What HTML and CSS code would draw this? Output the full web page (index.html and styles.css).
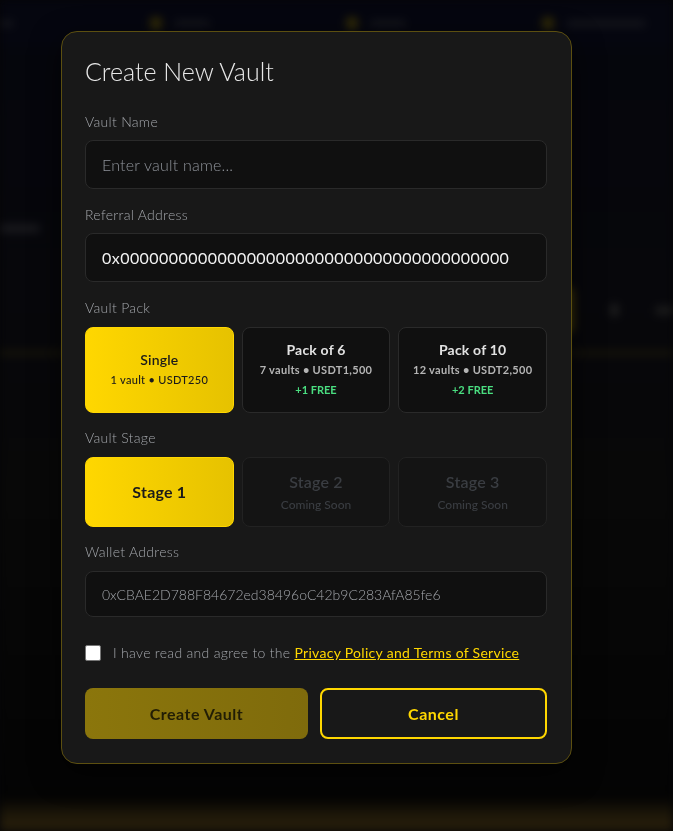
FILE: index.html
```html
<!DOCTYPE html>
<html lang="en">
<head>
    <meta charset="UTF-8">
    <meta name="viewport" content="width=device-width, initial-scale=1.0">
    <title>Create New Vault</title>
    <link rel="stylesheet" href="styles.css">
</head>
<body>
    <!-- Blurred page behind the modal -->
    <div class="backdrop-page">
        <nav class="top-nav">
            <span class="nav-text edge"></span>
            <div class="nav-item"><span class="nav-dot"></span><span class="nav-text"></span></div>
            <div class="nav-item"><span class="nav-dot"></span><span class="nav-text"></span></div>
            <div class="nav-item"><span class="nav-dot"></span><span class="nav-text wide"></span></div>
        </nav>
        <section class="hero">
            <div class="hero-row">
                <span class="hero-text"></span>
            </div>
            <div class="hero-actions">
                <span class="ghost-btn"></span>
                <span class="ghost-icon"></span>
                <span class="ghost-label"></span>
            </div>
        </section>
        <div class="hero-line"></div>
        <div class="page-spacer"></div>
        <div class="bottom-glow"></div>
    </div>

    <div class="modal-overlay">
        <div class="modal">
            <h2 class="modal-title">Create New Vault</h2>

            <div class="field">
                <label for="vaultName">Vault Name</label>
                <input type="text" id="vaultName" class="text-input" placeholder="Enter vault name...">
            </div>

            <div class="field">
                <label for="referral">Referral Address</label>
                <input type="text" id="referral" class="text-input address" value="0x0000000000000000000000000000000000000000">
            </div>

            <div class="field option-field">
                <label>Vault Pack</label>
                <div class="option-grid">
                    <button class="pack-card selected">
                        <span class="card-title">Single</span>
                        <span class="card-sub">1 vault • USDT250</span>
                    </button>
                    <button class="pack-card">
                        <span class="card-title">Pack of 6</span>
                        <span class="card-sub">7 vaults • USDT1,500</span>
                        <span class="card-free">+1 FREE</span>
                    </button>
                    <button class="pack-card">
                        <span class="card-title">Pack of 10</span>
                        <span class="card-sub">12 vaults • USDT2,500</span>
                        <span class="card-free">+2 FREE</span>
                    </button>
                </div>
            </div>

            <div class="field option-field">
                <label>Vault Stage</label>
                <div class="option-grid">
                    <button class="stage-card selected">
                        <span class="stage-title">Stage 1</span>
                    </button>
                    <button class="stage-card disabled">
                        <span class="stage-title">Stage 2</span>
                        <span class="stage-sub">Coming Soon</span>
                    </button>
                    <button class="stage-card disabled">
                        <span class="stage-title">Stage 3</span>
                        <span class="stage-sub">Coming Soon</span>
                    </button>
                </div>
            </div>

            <div class="field wallet-field">
                <label for="wallet">Wallet Address</label>
                <input type="text" id="wallet" class="text-input readonly" value="0xCBAE2D788F84672ed38496oC42b9C283AfA85fe6" readonly>
            </div>

            <div class="agree-row">
                <span class="checkbox"></span>
                <span class="agree-text">I have read and agree to the <a href="#">Privacy Policy and Terms of Service</a></span>
            </div>

            <div class="modal-actions">
                <button class="btn-create">Create Vault</button>
                <button class="btn-cancel">Cancel</button>
            </div>
        </div>
    </div>
</body>
</html>
```

FILE: styles.css
```css
body {
    margin: 0;
    padding: 0;
    background: #050507;
    font-family: Lato, "Open Sans", sans-serif;
    color: #e5e5e5;
    overflow: hidden;
}

/* Page behind the modal */
.backdrop-page {
    height: 831px;
    display: flex;
    flex-direction: column;
    background: linear-gradient(180deg, #05060d 0%, #07070b 35%, #080808 60%, #030303 100%);
    filter: blur(4px);
}

.top-nav {
    height: 46px;
    display: flex;
    align-items: center;
    gap: 136px;
    background: #05060f;
}

.nav-item {
    display: flex;
    align-items: center;
    gap: 12px;
}

.nav-dot {
    width: 12px;
    height: 13px;
    border-radius: 4px;
    background: #2e2807;
}

.nav-text {
    width: 36px;
    height: 7px;
    border-radius: 4px;
    background: #13141a;
}

.nav-text.edge {
    width: 14px;
}

.nav-text.wide {
    width: 80px;
}

.hero {
    display: flex;
    flex-direction: column;
    padding-top: 178px;
}

.hero-row {
    height: 62px;
}

.hero-text {
    display: block;
    width: 40px;
    height: 9px;
    border-radius: 4px;
    background: #18181c;
}

.hero-actions {
    display: flex;
    align-items: center;
    padding-left: 548px;
    gap: 36px;
}

.ghost-btn {
    width: 42px;
    height: 48px;
    border-radius: 8px;
    background: #3a3108;
}

.ghost-icon {
    width: 14px;
    height: 14px;
    border-radius: 50%;
    background: #1e1e1e;
}

.ghost-label {
    width: 30px;
    height: 9px;
    border-radius: 4px;
    background: #1a1a1a;
}

.hero-line {
    height: 6px;
    margin-top: 16px;
    background: #15130a;
}

.page-spacer {
    flex: 1;
}

.bottom-glow {
    height: 34px;
    background: linear-gradient(180deg, rgba(40, 30, 10, 0) 0%, #211a0a 60%, #261d0b 100%);
}

/* Modal */
.modal-overlay {
    position: fixed;
    inset: 0;
    padding: 31px 0 0 61px;
}

.modal {
    box-sizing: border-box;
    width: 511px;
    padding: 23px 24px 24px 23px;
    background: #181818;
    border: 1px solid #5c4f10;
    border-radius: 16px;
    box-shadow: 0 10px 30px rgba(0, 0, 0, 0.6);
}

.modal-title {
    margin: 0 0 25px;
    font-size: 25px;
    line-height: 32px;
    font-weight: 300;
    color: #e8e8e8;
}

.field {
    margin-bottom: 16px;
}

.field label {
    display: block;
    margin-bottom: 8px;
    font-size: 14px;
    line-height: 20px;
    font-weight: 300;
    letter-spacing: 0.3px;
    color: #a3a6ab;
}

.option-field {
    margin-bottom: 15px;
}

.option-field label, .wallet-field label {
    margin-bottom: 9px;
}

.text-input {
    box-sizing: border-box;
    width: 100%;
    height: 49px;
    padding: 0 16px;
    background: #101010;
    border: 1px solid #2a2a2a;
    border-radius: 8px;
    font-family: inherit;
    font-size: 16px;
    color: #f2f2f2;
    outline: none;
}

.text-input::placeholder {
    color: #8f939a;
    font-weight: 300;
    letter-spacing: 0.2px;
}

.text-input.address {
    letter-spacing: 0.45px;
}

.text-input.readonly {
    height: 46px;
    font-size: 14px;
    font-weight: 300;
    color: #a3a6ab;
}

.option-grid {
    display: grid;
    grid-template-columns: repeat(3, 1fr);
    gap: 8px;
}

.pack-card, .stage-card {
    display: flex;
    flex-direction: column;
    align-items: center;
    justify-content: center;
    padding: 12px 6px;
    background: #101010;
    border: 1px solid #2a2a2a;
    border-radius: 8px;
    font-family: inherit;
    color: #e2e2e2;
    cursor: pointer;
}

.pack-card.selected, .stage-card.selected {
    background: linear-gradient(90deg, #ffd700 0%, #e6c200 100%);
    border-color: #ffd700;
    color: #1a1a1a;
}

.card-title {
    font-size: 14px;
    line-height: 20px;
    font-weight: 700;
    letter-spacing: 0.2px;
}

.pack-card.selected .card-title {
    font-weight: 600;
}

.card-sub {
    font-size: 11px;
    line-height: 20px;
    font-weight: 700;
    letter-spacing: 0.3px;
    color: #b5b5b5;
}

.pack-card.selected .card-sub {
    font-weight: 500;
    color: #1a1a1a;
}

.card-free {
    font-size: 11px;
    line-height: 20px;
    font-weight: 700;
    color: #4ade80;
}

.stage-card {
    padding: 12px 6px;
    height: 70px;
    box-sizing: border-box;
}

.stage-title {
    font-size: 16px;
    line-height: 24px;
    font-weight: 700;
    letter-spacing: 0.2px;
}

.stage-card.disabled {
    background: #141414;
    border-color: #222;
    color: #3a3d42;
    cursor: not-allowed;
}

.stage-card.disabled .stage-title {
    font-weight: 600;
}

.stage-sub {
    margin-top: 2px;
    font-size: 12px;
    line-height: 18px;
    font-weight: 500;
}

.agree-row {
    display: flex;
    align-items: center;
    gap: 12px;
    margin: 26px 0 25px;
}

.checkbox {
    width: 14px;
    height: 14px;
    background: #fff;
    border: 1px solid #767676;
    border-radius: 2px;
}

.agree-text {
    font-size: 14px;
    line-height: 20px;
    font-weight: 300;
    letter-spacing: 0.3px;
    color: #a3a6ab;
}

.agree-text a {
    color: #ffd700;
    font-weight: 400;
    text-decoration: underline;
}

.modal-actions {
    display: flex;
    gap: 12px;
}

.modal-actions button {
    flex: 1;
    box-sizing: content-box;
    padding: 0;
    height: 51px;
    border-radius: 8px;
    font-family: inherit;
    font-size: 16px;
    font-weight: 700;
    letter-spacing: 0.5px;
    cursor: pointer;
}

.btn-create {
    border: none;
    background: linear-gradient(90deg, #8b760c 0%, #7f6b0c 100%);
    color: #211d05;
}

.btn-cancel {
    height: 47px !important;
    background: transparent;
    border: 2px solid #ffd700;
    color: #ffd700;
}
```
